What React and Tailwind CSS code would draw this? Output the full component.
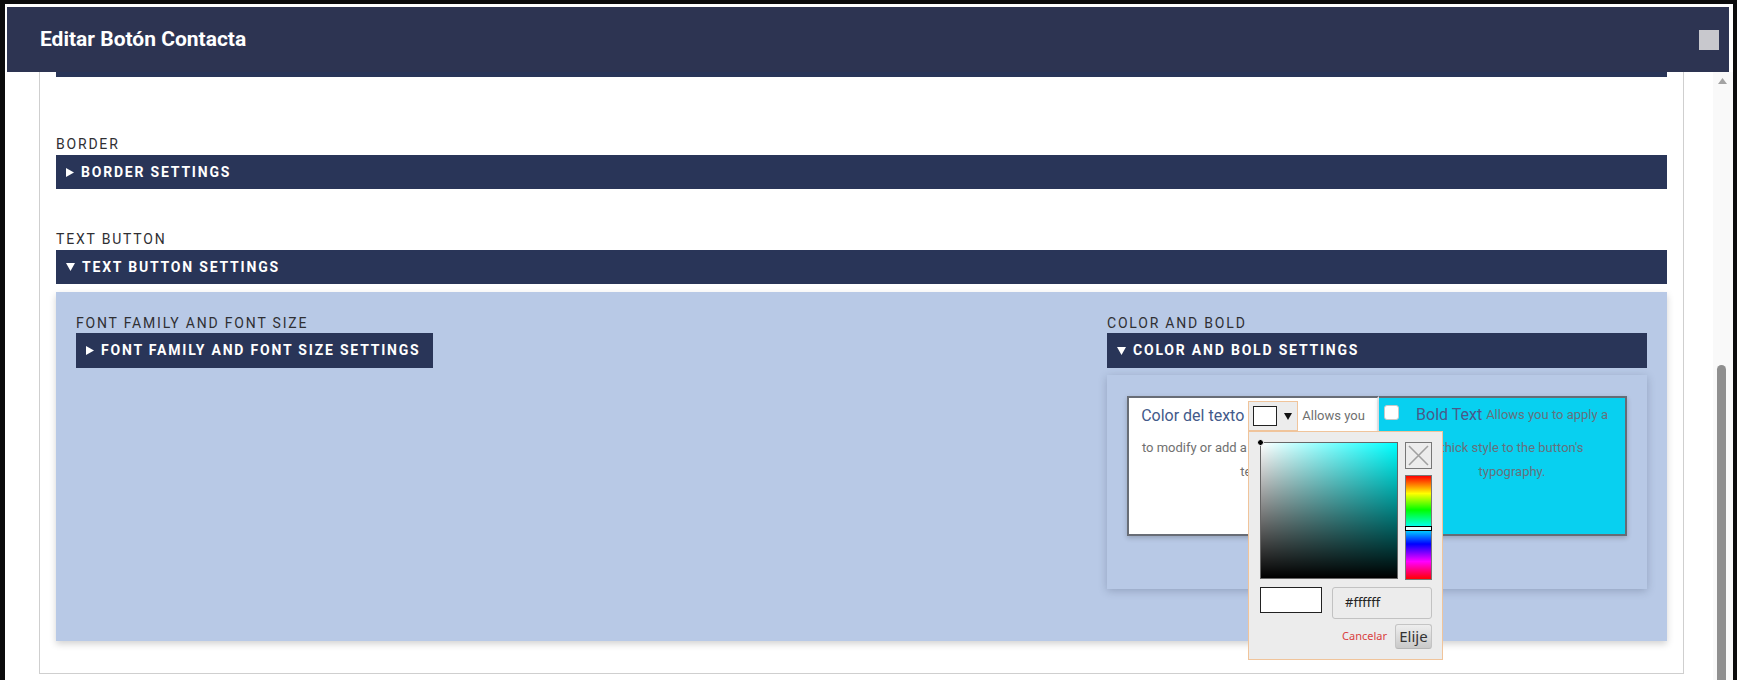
import React from 'react';

const Arrow = ({ down }) =>
  down ? (
    <svg width="9" height="8" viewBox="0 0 9 8" className="shrink-0">
      <path d="M0 0H9L4.5 8Z" fill="#fff" />
    </svg>
  ) : (
    <svg width="8" height="9" viewBox="0 0 8 9" className="shrink-0">
      <path d="M0 0L8 4.5L0 9Z" fill="#fff" />
    </svg>
  );

const Label = ({ children, inner }) => (
  <div
    className={
      inner
        ? 'mb-[2px] text-[14px] leading-[16px] tracking-[1.8px] text-[#2f2f33]'
        : 'mb-[3px] text-[14px] leading-[16px] tracking-[1.8px] text-[#2f2f33]'
    }
  >
    {children}
  </div>
);

const Bar = ({ title, open, inline, tall }) => (
  <div
    className={`${inline ? 'inline-flex pr-[12px]' : 'flex pr-[9px]'} ${tall ? 'h-[35px]' : 'h-[34px]'} items-center gap-[7px] bg-[#293558] pl-[10px] text-[14px] font-bold tracking-[1.8px] text-white`}
  >
    <Arrow down={open} />
    <span>{title}</span>
  </div>
);

const ColorPicker = () => (
  <div className="absolute left-[1248px] top-[431px] h-[229px] w-[195px] border border-[#f0c49b] bg-[#ececec] pl-[11px] pr-[10px] pt-[10px] font-['Noto_Sans',sans-serif]">
    <div className="flex gap-[7px]">
      <div className="relative h-[137px] w-[138px] border border-[#666] bg-[image:linear-gradient(to_top,#000,rgba(0,0,0,0)),linear-gradient(to_right,#fff,#0ff)]">
        <div className="absolute -left-[4px] -top-[4px] h-[7px] w-[7px] rounded-full border border-white bg-black" />
      </div>
      <div className="flex flex-col gap-[6px]">
        <div className="h-[27px] w-[27px] border border-[#777]">
          <svg width="25" height="25" viewBox="0 0 25 25">
            <path d="M3 3L22 22M22 3L3 22" stroke="#a0a0a0" strokeWidth="1.6" />
          </svg>
        </div>
        <div className="relative h-[105px] w-[27px] border border-[#777] bg-[linear-gradient(to_bottom,#ff0000_0%,#ffff00_17%,#00ff00_33%,#00ffff_50%,#0000ff_66%,#ff00ff_83%,#ff0000_100%)]">
          <div className="absolute -left-[1px] -right-[1px] top-[50px] h-[5px] border border-black bg-[#e8ffff]" />
        </div>
      </div>
    </div>
    <div className="mt-[7px] flex gap-[10px]">
      <div className="h-[26px] w-[62px] border border-[#222] bg-white" />
      <div className="flex h-[32px] w-[100px] items-center rounded-[3px] border border-[#c2c2c2] pl-[12px] text-[13px] text-[#222]">
        #ffffff
      </div>
    </div>
    <div className="mt-[5px] flex items-center justify-end gap-[8px]">
      <span className="text-[11px] text-[#d93f3f]">Cancelar</span>
      <button className="flex h-[25px] w-[37px] items-center justify-center rounded-[3px] border border-[#c4c4c4] border-b-[#b5b5b5] bg-[linear-gradient(to_bottom,#eeeeee,#c9c9c9)] text-[15px] leading-none text-[#333]">
        Elije
      </button>
    </div>
  </div>
);

const ColorAndBold = () => (
  <div className="mt-[7px] h-[214px] bg-[#b8c9e6] pl-[20px] pt-[21px] shadow-[0_2px_8px_rgba(40,50,80,0.25)]">
    <div className="flex">
      <div className="h-[140px] w-[252px] border-2 border-[#686d76] border-r-[#eceef2] bg-white shadow-[0_2px_5px_rgba(0,0,0,0.2)]">
        <div className="flex h-[36px] items-center justify-center gap-[4px]">
          <span className="text-[16px] text-[#435a8a]">Color del texto</span>
          <div className="flex h-[30px] w-[50px] items-center gap-[7px] border border-[#f0c49b] bg-[#ececec] pl-[4px]">
            <div className="h-[20px] w-[24px] border border-[#222] bg-white" />
            <svg width="8" height="7" viewBox="0 0 8 7">
              <path d="M0 0H8L4 7Z" fill="#111" />
            </svg>
          </div>
          <span className="text-[13px] text-[#707070]">Allows you</span>
        </div>
        <p className="mt-[2px] text-center text-[13px] leading-[24px] text-[#707070]">
          to modify or add a color to the button's
          <br />
          text.
        </p>
      </div>
      <div className="flex h-[140px] w-[248px] border-2 border-l-0 border-[#656c76] bg-[#08d0f0] shadow-[0_2px_5px_rgba(0,0,0,0.2)]">
        <div className="ml-[5px] mt-[7px] h-[15px] w-[15px] shrink-0 rounded-[3px] border border-[#c9c9c9] bg-white" />
        <div className="flex-1 text-center">
          <div className="flex h-[33px] items-center justify-center gap-[4px]">
            <span className="text-[16px] text-[#4a5a8a]">Bold Text</span>
            <span className="text-[13px] text-[#66707c]">Allows you to apply a</span>
          </div>
          <p className="mt-[5px] text-[13px] leading-[24px] text-[#66707c]">
            thick style to the button's
            <br />
            typography.
          </p>
        </div>
      </div>
    </div>
  </div>
);

export default function App() {
  return (
    <div className="relative h-[680px] w-[1737px] overflow-hidden bg-[#0b0b0c] pl-[5px] pr-[4px] pt-[4px] font-['Roboto',sans-serif]">
      <div className="flex h-full flex-col bg-white pt-[3px]">
        <header className="ml-[2px] mr-[4px] flex h-[65px] shrink-0 items-center justify-between bg-[#2d3452] pl-[33px] pr-[10px]">
          <h1 className="text-[21px] font-bold text-white">Editar Botón Contacta</h1>
          <div className="h-[20px] w-[20px] bg-[#c8c8cd]" />
        </header>

        <div className="flex min-h-0 flex-1">
          <div className="min-w-0 flex-1 overflow-hidden pl-[34px] pr-[29px]">
            <div className="border-x border-b border-[#cfcfcf] px-4 pb-[32px]">
              <div className="h-[5px] bg-[#293558]" />

              <div className="mt-[59px]">
                <Label>BORDER</Label>
                <Bar title="BORDER SETTINGS" />
              </div>

              <div className="mt-[42px]">
                <Label>TEXT BUTTON</Label>
                <Bar title="TEXT BUTTON SETTINGS" open />
              </div>

              <div className="mt-[8px] flex h-[349px] justify-between bg-[#b8c9e6] px-[20px] pt-[23px] shadow-[0_3px_7px_rgba(0,0,0,0.18)]">
                <div>
                  <Label inner>FONT FAMILY AND FONT SIZE</Label>
                  <Bar title="FONT FAMILY AND FONT SIZE SETTINGS" inline tall />
                </div>
                <div className="w-[540px]">
                  <Label inner>COLOR AND BOLD</Label>
                  <Bar title="COLOR AND BOLD SETTINGS" open tall />
                  <ColorAndBold />
                </div>
              </div>
            </div>
          </div>

          {/* scrollbar */}
          <div className="flex w-[20px] shrink-0 flex-col overflow-hidden bg-[#f9f9f9] pl-[4px]">
            <svg width="9" height="6" viewBox="0 0 9 6" className="ml-[1px] mt-[6px] shrink-0">
              <path d="M0 6L4.5 0L9 6Z" fill="#a3a3a3" />
            </svg>
            <div className="mt-[281px] h-[400px] w-[9px] shrink-0 rounded-full bg-[#8f8f8f]" />
          </div>
        </div>
      </div>

      <ColorPicker />
    </div>
  );
}
